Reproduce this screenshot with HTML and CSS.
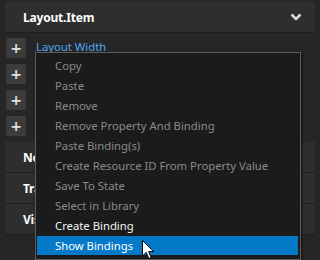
FILE: index.html
```html
<!DOCTYPE html>
<html lang="en">
<head>
    <meta charset="UTF-8">
    <title>Layout.Item</title>
    <link rel="stylesheet" href="styles.css">
</head>
<body>
    <div class="panel">
        <div class="section-header">
            <span class="title">Layout.Item</span>
            <svg class="chevron" width="12" height="8" viewBox="0 0 12 8"><path d="M1.5 1.5 L6 6 L10.5 1.5" fill="none" stroke="#d8d8d8" stroke-width="2.6"/></svg>
        </div>

        <div class="props">
            <div class="prop-row">
                <button class="add-btn">+</button>
                <span class="prop-name">Layout Width</span>
            </div>
            <div class="prop-row"><button class="add-btn">+</button></div>
            <div class="prop-row"><button class="add-btn">+</button></div>
            <div class="prop-row"><button class="add-btn">+</button></div>
        </div>

        <div class="collapsed">
            <div class="section-header">
                <span class="title">Node</span>
                <svg class="chevron" width="12" height="8" viewBox="0 0 12 8"><path d="M1.5 1.5 L6 6 L10.5 1.5" fill="none" stroke="#d8d8d8" stroke-width="2.6"/></svg>
            </div>
            <div class="section-header">
                <span class="title">Transformation</span>
                <svg class="chevron" width="12" height="8" viewBox="0 0 12 8"><path d="M1.5 1.5 L6 6 L10.5 1.5" fill="none" stroke="#d8d8d8" stroke-width="2.6"/></svg>
            </div>
            <div class="section-header">
                <span class="title">Visibility</span>
                <svg class="chevron" width="12" height="8" viewBox="0 0 12 8"><path d="M1.5 1.5 L6 6 L10.5 1.5" fill="none" stroke="#d8d8d8" stroke-width="2.6"/></svg>
            </div>
        </div>
    </div>

    <!-- context menu over the property list -->
    <ul class="context-menu">
        <li class="disabled">Copy</li>
        <li class="disabled">Paste</li>
        <li class="disabled">Remove</li>
        <li class="disabled">Remove Property And Binding</li>
        <li class="disabled">Paste Binding(s)</li>
        <li class="disabled">Create Resource ID From Property Value</li>
        <li class="disabled">Save To State</li>
        <li class="disabled">Select in Library</li>
        <li>Create Binding</li>
        <li class="active">Show Bindings</li>
    </ul>

    <svg class="cursor" width="13" height="20" viewBox="0 0 13 20">
        <path d="M0.5 0.5 L0.5 16 L4.2 12.4 L6.8 18.6 L9.2 17.6 L6.7 11.6 L11.8 11.6 Z" fill="#fff" stroke="#000" stroke-width="1"/>
    </svg>
</body>
</html>
```

FILE: styles.css
```css
body {
    margin: 0;
    width: 320px;
    height: 260px;
    overflow: hidden;
    background: #262626;
    font-family: "Noto Sans", "Open Sans", sans-serif;
    font-size: 11.3px;
    position: relative;
}
.panel {
    padding: 2px 5px 0 5px;
}
.section-header {
    height: 30px;
    background: #2e2e2e;
    box-shadow: 0 1px 0 #1e1e1e;
    display: flex;
    align-items: center;
    justify-content: space-between;
    padding: 0 13px 0 18px;
}
.title {
    color: #fff;
    font-weight: bold;
    font-size: 12px;
    letter-spacing: -0.2px;
}
.props {
    padding-top: 6px;
}
.prop-row {
    height: 26px;
    display: flex;
    align-items: flex-start;
}
.add-btn {
    width: 20px;
    height: 20px;
    margin-left: 1px;
    padding: 0;
    border: none;
    border-radius: 2px;
    background: #3c3c3c;
    color: #e0e0e0;
    font-family: "DejaVu Sans", sans-serif;
    font-size: 14px;
    font-weight: bold;
    line-height: 20px;
}
.prop-name {
    color: #4ea6f2;
    margin-left: 10px;
    margin-top: 1px;
}
.collapsed {
    display: flex;
    flex-direction: column;
    gap: 1px;
}
.context-menu {
    position: absolute;
    left: 35px;
    top: 52px;
    width: 261px;
    height: 203px;
    margin: 0;
    padding: 3px 2px 0 1px;
    list-style: none;
    background: #1b1b1b;
    border: 1px solid #5c5c5c;
    box-shadow: 1px 1px 2px #111;
}
.context-menu li {
    height: 20px;
    line-height: 20px;
    padding-left: 18px;
    color: #f2f2f2;
}
.context-menu li.disabled {
    color: #8a8a8a;
}
.context-menu li.active {
    height: 19px;
    line-height: 19px;
    background: #0479c8;
    color: #fff;
}
.cursor {
    position: absolute;
    left: 142px;
    top: 240px;
}
```
